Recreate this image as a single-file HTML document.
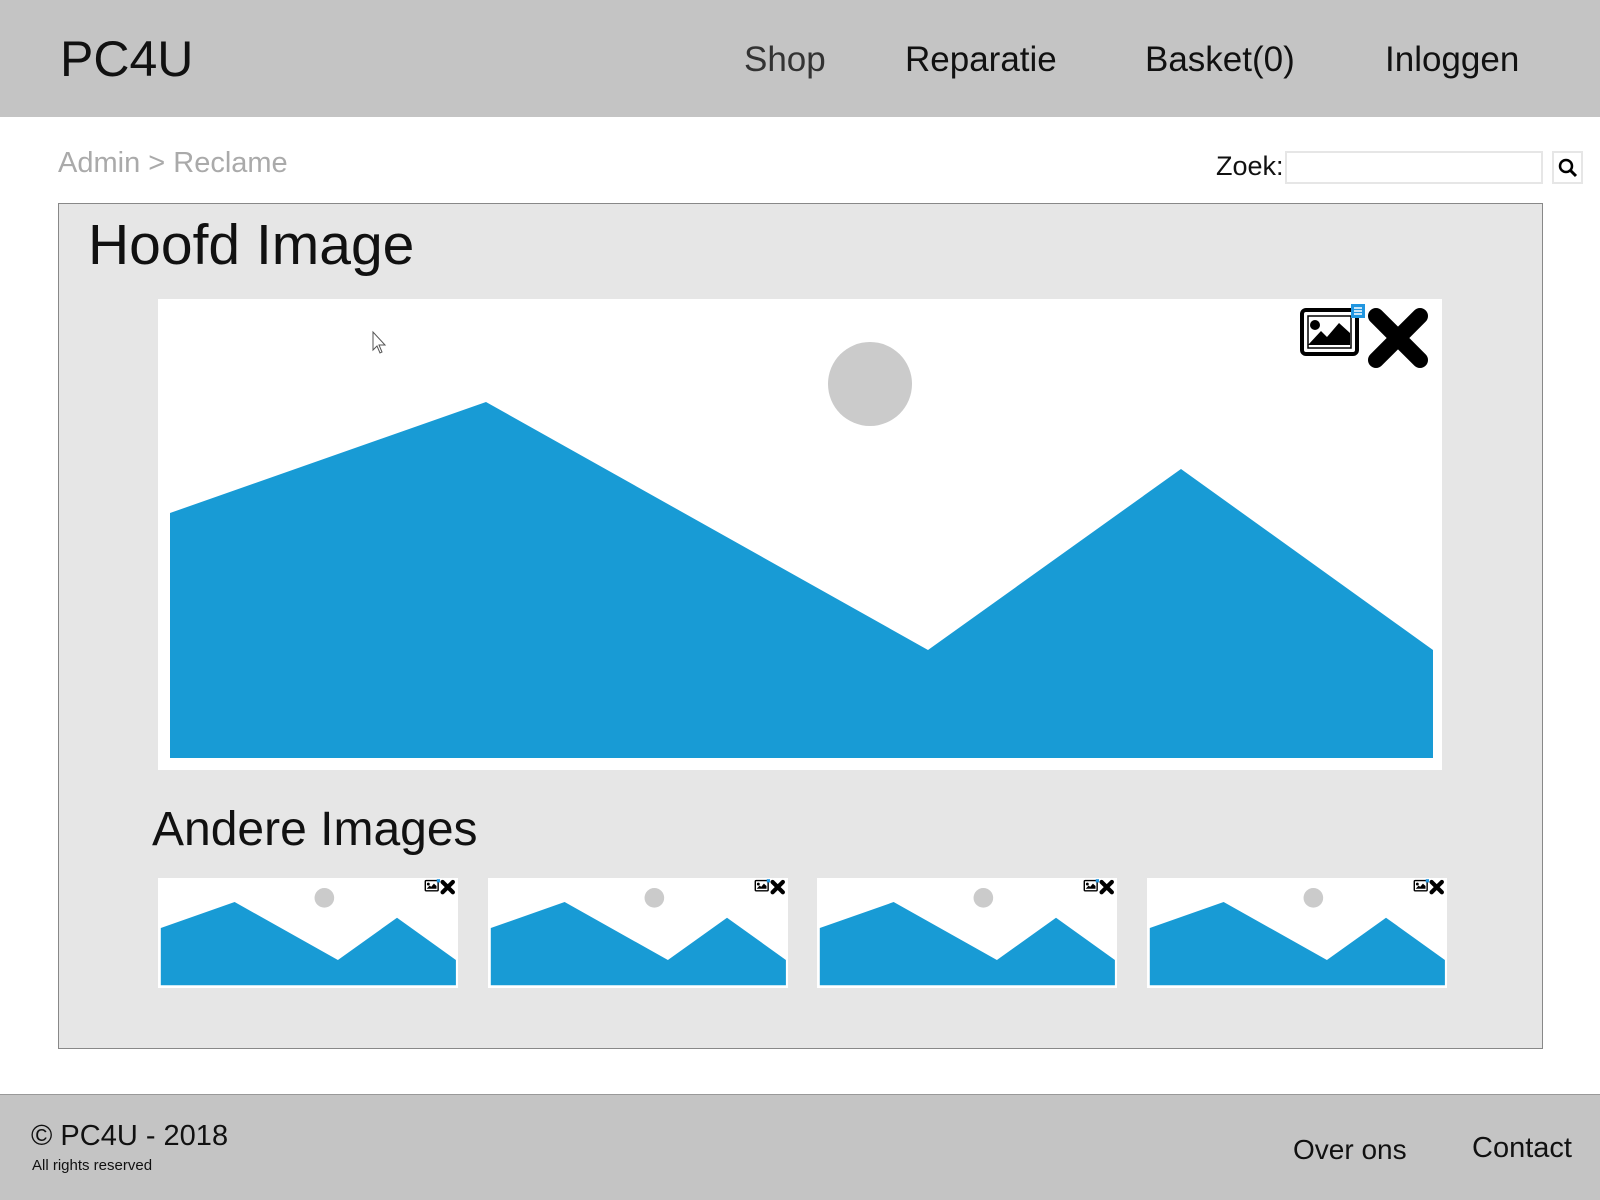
<!DOCTYPE html>
<html><head><meta charset="utf-8"><style>
*{margin:0;padding:0;box-sizing:border-box}
body{width:1600px;height:1200px;position:relative;background:#fff;font-family:"Liberation Sans",sans-serif;overflow:hidden}
.a{position:absolute;white-space:nowrap}
#hdr{position:absolute;left:0;top:0;width:1600px;height:117px;background:#c4c4c4}
#ftr{position:absolute;left:0;top:1094px;width:1600px;height:106px;background:#c4c4c4;border-top:1px solid #999}
.nav{font-size:35px;color:#111;top:40px}
#panel{position:absolute;left:58px;top:203px;width:1485px;height:846px;background:#e6e6e6;border:1px solid #888}
.img{position:absolute;background:#fff}
</style></head><body>
<div id="hdr"></div>
<div class="a" style="left:60px;top:30px;font-size:50px;color:#111">PC4U</div>
<div class="a nav" style="left:744px;color:#333">Shop</div>
<div class="a nav" style="left:905px">Reparatie</div>
<div class="a nav" style="left:1145px">Basket(0)</div>
<div class="a nav" style="left:1385px">Inloggen</div>
<div class="a" style="left:58px;top:147px;font-size:29px;color:#aaa">Admin &gt; Reclame</div>
<div class="a" style="left:1216px;top:151px;font-size:27px;color:#111">Zoek:</div>
<div class="a" style="left:1285px;top:151px;width:258px;height:33px;border:2px solid #e6e6e6;background:#fff"></div>
<div class="a" style="left:1552px;top:151px;width:31px;height:33px;border:2px solid #e6e6e6;background:#fff">
<svg width="27" height="29" viewBox="0 0 27 29"><circle cx="12" cy="13" r="6" fill="none" stroke="#000" stroke-width="2.5"/><line x1="16" y1="17" x2="22" y2="23" stroke="#000" stroke-width="3"/></svg></div>
<div id="panel"></div>
<div class="a" style="left:88px;top:212px;font-size:57px;color:#111">Hoofd Image</div>
<div class="img" style="left:158px;top:299px;width:1284px;height:471px">
<svg width="1284" height="471" viewBox="0 0 1284 471" style="position:absolute;left:0;top:0">
<polygon points="12,214 328,103 770,351 1023,170 1275,351 1275,459 12,459" fill="#189bd5"/>
<circle cx="712" cy="85" r="42" fill="#cbcbcb"/>
<path d="M215,33 v18 l4,-4 l3,7 l2,-1 l-3,-7 h6 z" fill="#fff" stroke="#555" stroke-width="1"/>
<rect x="1144" y="11" width="55" height="44" rx="4" fill="none" stroke="#000" stroke-width="4"/>
<rect x="1150" y="17" width="43" height="32" fill="none" stroke="#000" stroke-width="1.5"/>
<circle cx="1157" cy="26" r="5" fill="#000"/>
<polygon points="1150,46 1163,32 1169,38 1181,24 1192,34 1192,46" fill="#000"/>
<rect x="1193" y="5" width="14" height="14" fill="#2196e0"/>
<path d="M1196,9h8M1196,12h8M1196,15h8" stroke="#fff" stroke-width="1.5"/>
<path d="M1218,17 L1262,61 M1262,17 L1218,61" stroke="#000" stroke-width="16" stroke-linecap="round"/>
</svg></div>
<div class="a" style="left:152px;top:802px;font-size:48px;color:#111">Andere Images</div>
<svg width="0" height="0" style="position:absolute"><defs><g id="th">
<polygon points="12,214 328,103 770,351 1023,170 1275,351 1275,459 12,459" fill="#189bd5"/>
<circle cx="712" cy="85" r="42" fill="#cbcbcb"/>
<rect x="1144" y="11" width="55" height="44" rx="4" fill="none" stroke="#000" stroke-width="6"/>
<polygon points="1150,46 1163,32 1169,38 1181,24 1192,34 1192,46" fill="#000"/>
<circle cx="1157" cy="26" r="6" fill="#000"/>
<rect x="1193" y="5" width="14" height="14" fill="#2196e0"/>
<path d="M1218,17 L1262,61 M1262,17 L1218,61" stroke="#000" stroke-width="18" stroke-linecap="round"/>
</g></defs></svg>
<div class="img" style="left:158px;top:878px;width:300px;height:110px"><svg width="300" height="110" viewBox="0 0 1284 471" preserveAspectRatio="none"><use href="#th"/></svg></div>
<div class="img" style="left:488px;top:878px;width:300px;height:110px"><svg width="300" height="110" viewBox="0 0 1284 471" preserveAspectRatio="none"><use href="#th"/></svg></div>
<div class="img" style="left:817px;top:878px;width:300px;height:110px"><svg width="300" height="110" viewBox="0 0 1284 471" preserveAspectRatio="none"><use href="#th"/></svg></div>
<div class="img" style="left:1147px;top:878px;width:300px;height:110px"><svg width="300" height="110" viewBox="0 0 1284 471" preserveAspectRatio="none"><use href="#th"/></svg></div>
<div id="ftr"></div>
<div class="a" style="left:31px;top:1120px;font-size:29px;color:#111">© PC4U - 2018</div>
<div class="a" style="left:32px;top:1157px;font-size:15px;color:#111">All rights reserved</div>
<div class="a" style="left:1293px;top:1134px;font-size:28px;color:#111">Over ons</div>
<div class="a" style="left:1472px;top:1132px;font-size:29px;color:#111">Contact</div>
</body></html>
